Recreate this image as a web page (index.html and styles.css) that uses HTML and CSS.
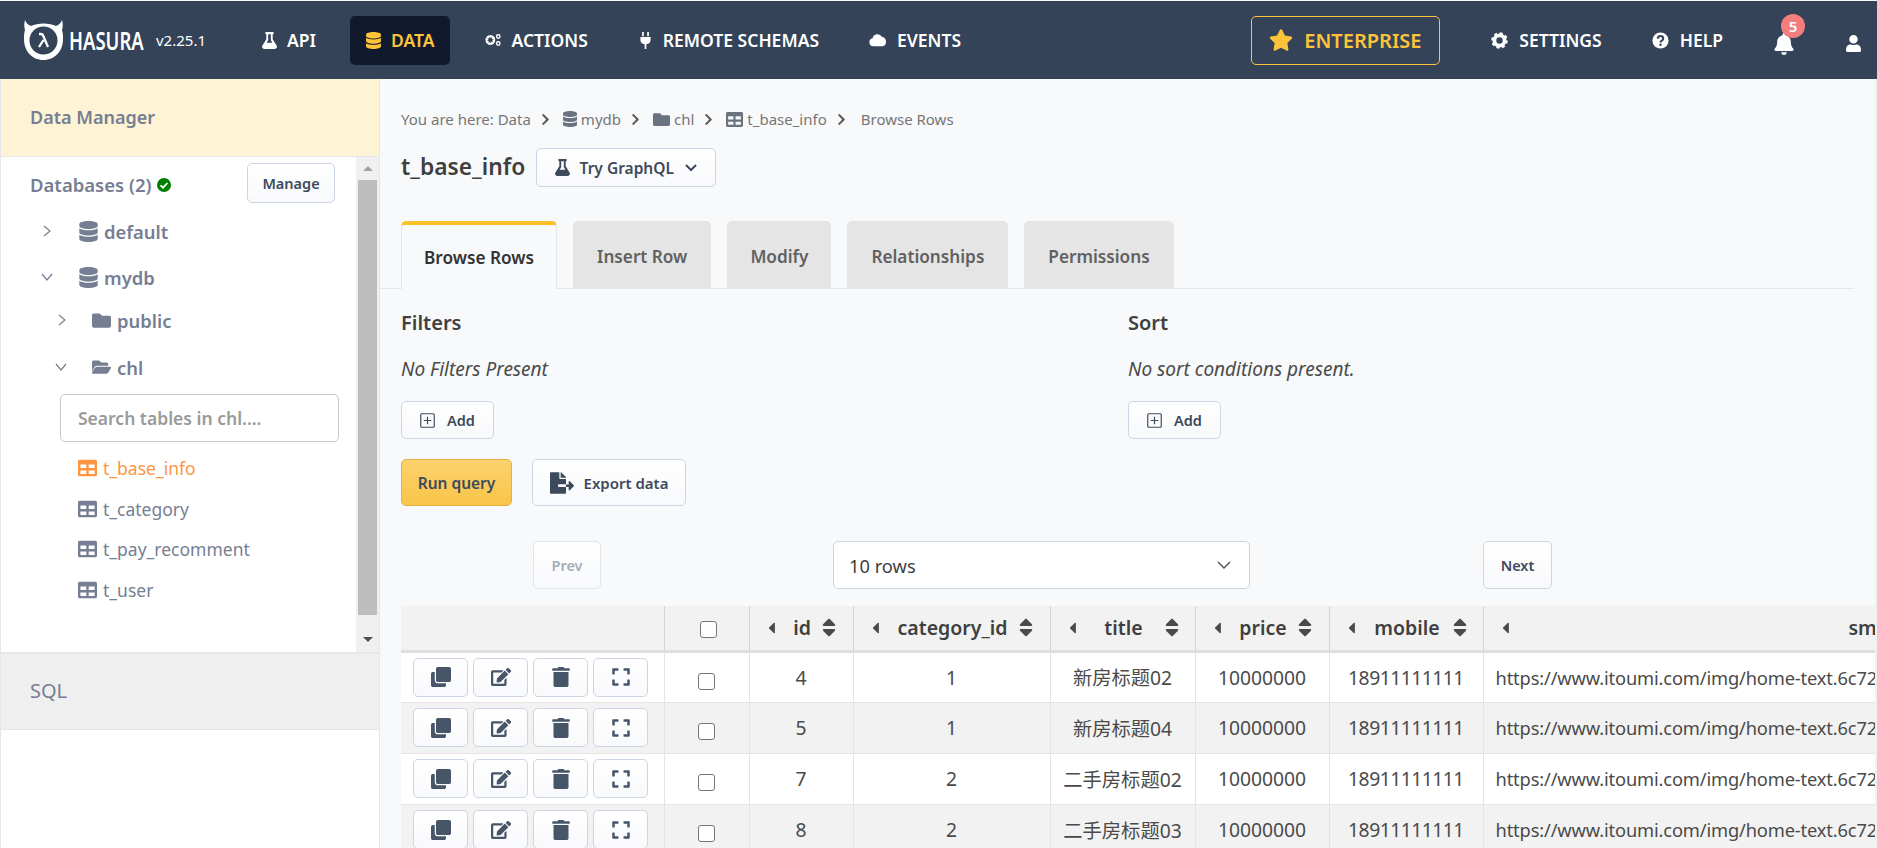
FILE: index.html
```html
<!DOCTYPE html>
<html lang="en">
<head>
<meta charset="utf-8">
<title>Hasura</title>
<link rel="stylesheet" href="styles.css">
</head>
<body>
<svg class="defs" width="0" height="0" aria-hidden="true">
  <defs>
    <symbol id="i-db" viewBox="0 0 448 512"><path d="M448 73v46c0 40-100 73-224 73S0 159 0 119V73C0 33 100 0 224 0s224 33 224 73zm0 103v103c0 40-100 73-224 73S0 319 0 279V176c48 33 136 49 224 49s176-16 224-49zm0 160v103c0 40-100 73-224 73S0 479 0 439V336c48 33 136 49 224 49s176-16 224-49z"/></symbol>
    <symbol id="i-table" viewBox="0 0 512 512"><path d="M464 32H48C21 32 0 53 0 80v352c0 27 21 48 48 48h416c27 0 48-21 48-48V80c0-27-21-48-48-48zM224 416H64v-96h160v96zm0-160H64v-96h160v96zm224 160H288v-96h160v96zm0-160H288v-96h160v96z"/></symbol>
    <symbol id="i-folder" viewBox="0 0 512 512"><path d="M464 128H272l-64-64H48C21 64 0 85 0 112v288c0 27 21 48 48 48h416c27 0 48-21 48-48V176c0-27-21-48-48-48z"/></symbol>
    <symbol id="i-folder-open" viewBox="0 0 576 512"><path d="M573 279l-72 123c-14 24-43 46-72 46H29c-23 0-38-25-26-45l72-123c14-24 43-46 72-46h400c23 0 38 25 26 45zM147 200h341v-48c0-27-21-48-48-48H280l-64-64H48C21 40 0 61 0 88v278l69-119c17-29 48-47 78-47z"/></symbol>
    <symbol id="i-flask" viewBox="0 0 448 512"><path d="M437 409L320 221V64h8c13 0 24-11 24-24V24c0-13-11-24-24-24H120c-13 0-24 11-24 24v16c0 13 11 24 24 24h8v157L11 409c-29 47 4 103 59 103h308c55 0 88-56 59-103zM138 320l40-65c3-4 6-9 6-16V64h80v175c0 7 3 12 6 16l40 65H138z"/></symbol>
    <symbol id="i-copy" viewBox="0 0 512 512"><path d="M464 0c27 0 48 21 48 48v288c0 27-21 48-48 48H176c-27 0-48-21-48-48V48c0-27 21-48 48-48h288zM176 416c-44 0-80-36-80-80V128H48c-27 0-48 21-48 48v288c0 27 21 48 48 48h288c27 0 48-21 48-48v-48H176z"/></symbol>
    <symbol id="i-edit" viewBox="0 0 576 512"><path d="M403 79l90 90c4 4 4 10 0 14L275 401l-93 10c-12 2-22-8-21-21l11-93L390 79c4-4 9-4 13 0zm162-23l-49-48c-15-15-39-15-54 0l-35 35c-4 4-4 10 0 14l90 90c4 4 10 4 14 0l35-35c14-16 14-40-1-56zM384 346v102H64V128h230c3 0 6-1 8-4l40-40c8-8 2-20-8-20H48C21 64 0 85 0 112v352c0 27 21 48 48 48h352c27 0 48-21 48-48V306c0-11-13-16-20-9l-40 40c-3 2-4 6-4 9z"/></symbol>
    <symbol id="i-trash" viewBox="0 0 448 512"><path d="M32 464c0 27 21 48 48 48h288c27 0 48-21 48-48V128H32v336zM432 32H312l-9-19c-4-8-12-13-21-13H166c-9 0-17 5-21 13l-9 19H16C7 32 0 39 0 48v32c0 9 7 16 16 16h416c9 0 16-7 16-16V48c0-9-7-16-16-16z"/></symbol>
    <symbol id="i-expand" viewBox="0 0 448 512"><path d="M0 180V56c0-13 11-24 24-24h124c7 0 12 5 12 12v40c0 7-5 12-12 12H64v84c0 7-5 12-12 12H12c-7 0-12-5-12-12zM288 44v40c0 7 5 12 12 12h84v84c0 7 5 12 12 12h40c7 0 12-5 12-12V56c0-13-11-24-24-24H300c-7 0-12 5-12 12zm148 276h-40c-7 0-12 5-12 12v84h-84c-7 0-12 5-12 12v40c0 7 5 12 12 12h124c13 0 24-11 24-24V332c0-7-5-12-12-12zM160 468v-40c0-7-5-12-12-12H64v-84c0-7-5-12-12-12H12c-7 0-12 5-12 12v124c0 13 11 24 24 24h124c7 0 12-5 12-12z"/></symbol>
    <symbol id="i-sort" viewBox="0 0 320 512"><path d="M41 288h238c21 0 32 26 17 41L177 448c-9 9-25 9-34 0L24 329c-15-15-4-41 17-41zM296 183L177 64c-9-9-25-9-34 0L24 183c-15 15-4 41 17 41h238c21 0 32-26 17-41z"/></symbol>
    <symbol id="i-left" viewBox="0 0 192 512"><path d="M192 127v258c0 18-21 27-34 14L29 270c-8-8-8-20 0-28L158 113c13-13 34-4 34 14z"/></symbol>
    <symbol id="i-chev" viewBox="0 0 320 512"><path d="M285 273L91 467c-9 9-24 9-34 0l-22-22c-10-10-10-25 0-34l154-155L35 101c-10-9-10-24 0-34l22-22c10-9 25-9 34 0l194 194c10 10 10 25 0 34z"/></symbol>
  </defs>
</svg>

<header class="topbar">
  <div class="brand">
    <svg class="logo" viewBox="0 0 39 40" aria-hidden="true">
      <path fill="#fff" d="M1 0c1 3 3 5 6 6 3-1.500 8-2.500 12.500-2.500S29 4.500 32 6c3-1 5-3 6-6 1 3 1 7 0 10 1 3 1 6 1 9 0 12-8 21-19.500 21S0 31 0 19c0-3 0-6 1-9C0 7 0 3 1 0z"/>
      <circle cx="19.500" cy="20.500" r="14" fill="#344358"/>
      <path fill="none" stroke="#fff" stroke-width="2.300" d="M15 14h2c1.500 0 2 1 2.500 2.500L24 27M19.500 20l-4.500 7"/>
    </svg>
    <span class="wordmark">HASURA</span>
    <span class="version">v2.25.1</span>
  </div>
  <nav class="nav">
    <a class="nav-item"><svg class="nav-icon"><use href="#i-flask"/></svg>API</a>
    <a class="nav-item nav-active"><svg class="nav-icon"><use href="#i-db"/></svg>DATA</a>
    <a class="nav-item"><svg class="nav-icon-wide" viewBox="0 0 20 16" aria-hidden="true"><circle cx="7" cy="8" r="4" fill="none" stroke="#fff" stroke-width="3" stroke-dasharray="2 1"/><circle cx="7" cy="8" r="4.500" fill="none" stroke="#fff" stroke-width="2"/><circle cx="16" cy="4" r="2" fill="none" stroke="#fff" stroke-width="1.500"/><circle cx="16" cy="12" r="2" fill="none" stroke="#fff" stroke-width="1.500"/></svg>ACTIONS</a>
    <a class="nav-item"><svg class="nav-icon" viewBox="0 0 16 20" aria-hidden="true"><path fill="#fff" d="M4 0h2v5H4zM10 0h2v5h-2zM2 6h12v3c0 3-2 5-5 5.500V20H7v-5.500C4 14 2 12 2 9z"/></svg>REMOTE SCHEMAS</a>
    <a class="nav-item"><svg class="nav-icon-wide" viewBox="0 0 20 14" aria-hidden="true"><path fill="#fff" d="M5 14a4.500 4.500 0 0 1-1-8.900A5.500 5.500 0 0 1 14.300 3.500 5.500 5.500 0 0 1 15.500 14z"/></svg>EVENTS</a>
  </nav>
  <a class="enterprise"><svg class="star" viewBox="0 0 576 512" aria-hidden="true"><path d="M259 18l-65 132-146 21c-26 4-37 36-18 55l106 103-25 146c-5 26 23 46 46 33l131-68 131 68c23 13 51-7 46-33l-25-146 106-103c19-19 8-51-18-55l-146-21-65-132c-12-23-46-24-58 0z"/></svg>ENTERPRISE</a>
  <div class="nav-right">
    <a class="nav-item"><svg class="nav-icon-sq" viewBox="0 0 20 20" aria-hidden="true"><circle cx="10" cy="10" r="6" fill="none" stroke="#fff" stroke-width="4.500"/><circle cx="10" cy="10" r="8.500" fill="none" stroke="#fff" stroke-width="2.500" stroke-dasharray="3.500 3.170"/></svg>SETTINGS</a>
    <a class="nav-item"><svg class="nav-icon-sq" viewBox="0 0 20 20" aria-hidden="true"><circle cx="10" cy="10" r="9.500" fill="#fff"/><path fill="none" stroke="#344358" stroke-width="2.400" d="M6.800 7.800c0-4.200 6.400-4 6.400 0 0 2.600-3.200 2.200-3.200 4.500"/><circle cx="10" cy="15" r="1.400" fill="#344358"/></svg>HELP</a>
    <span class="bell-wrap">
      <svg class="bell" viewBox="0 0 448 512" aria-hidden="true"><path fill="#fff" d="M224 512c35 0 64-29 64-64H160c0 35 29 64 64 64zm215-150c-19-21-55-52-55-154 0-78-54-140-128-155V32a32 32 0 0 0-64 0v21C118 68 64 130 64 208c0 102-36 133-55 154-6 6-9 14-9 22 0 16 13 32 32 32h384c19 0 32-16 32-32 0-8-3-16-9-22z"/></svg>
      <span class="badge">5</span>
    </span>
    <svg class="user" viewBox="0 0 448 512" aria-hidden="true"><path fill="#fff" d="M224 256a128 128 0 1 0 0-256 128 128 0 0 0 0 256zm90 32h-17a174 174 0 0 1-146 0h-17C60 288 0 348 0 422v42c0 27 21 48 48 48h352c27 0 48-21 48-48v-42c0-74-60-134-134-134z"/></svg>
  </div>
</header>

<div class="layout">
  <aside class="sidebar">
    <div class="side-head">Data Manager</div>
    <div class="side-panel">
      <div class="tree">
        <div class="db-row">
          <span class="db-title">Databases (2)</span>
          <svg class="ok" viewBox="0 0 14 14" aria-hidden="true"><circle cx="7" cy="7" r="7" fill="#008000"/><path d="M3.500 7.300l2.500 2.400 4.500-4.700" fill="none" stroke="#fff" stroke-width="1.800"/></svg>
          <button class="btn btn-manage">Manage</button>
        </div>
        <div class="node node-db"><svg class="caret caret-right" viewBox="0 0 10 14"><path d="M2 2l6 5-6 5"/></svg><svg class="node-icon"><use href="#i-db"/></svg><b>default</b></div>
        <div class="node node-db node-db2"><svg class="caret caret-down" viewBox="0 0 14 10"><path d="M2 2l5 6 5-6"/></svg><svg class="node-icon"><use href="#i-db"/></svg><b>mydb</b></div>
        <div class="node node-sch"><svg class="caret caret-right" viewBox="0 0 10 14"><path d="M2 2l6 5-6 5"/></svg><svg class="node-icon"><use href="#i-folder"/></svg><b>public</b></div>
        <div class="node node-sch node-sch2"><svg class="caret caret-down" viewBox="0 0 14 10"><path d="M2 2l5 6 5-6"/></svg><svg class="node-icon"><use href="#i-folder-open"/></svg><b>chl</b></div>
        <div class="search">Search tables in chl....</div>
        <ul class="tables">
          <li class="tbl tbl-active"><svg class="tbl-icon"><use href="#i-table"/></svg>t_base_info</li>
          <li class="tbl"><svg class="tbl-icon"><use href="#i-table"/></svg>t_category</li>
          <li class="tbl"><svg class="tbl-icon"><use href="#i-table"/></svg>t_pay_recomment</li>
          <li class="tbl"><svg class="tbl-icon"><use href="#i-table"/></svg>t_user</li>
        </ul>
      </div>
      <div class="scrollbar">
        <span class="arrow-up"></span>
        <span class="thumb"></span>
        <span class="arrow-down"></span>
      </div>
    </div>
    <div class="side-sql">SQL</div>
  </aside>

  <main class="main">
    <div class="crumbs">
      <span>You are here: Data</span><svg class="crumb-sep"><use href="#i-chev"/></svg>
      <svg class="crumb-db"><use href="#i-db"/></svg><span>mydb</span><svg class="crumb-sep"><use href="#i-chev"/></svg>
      <svg class="crumb-icon"><use href="#i-folder"/></svg><span>chl</span><svg class="crumb-sep"><use href="#i-chev"/></svg>
      <svg class="crumb-icon"><use href="#i-table"/></svg><span>t_base_info</span><svg class="crumb-sep crumb-last"><use href="#i-chev"/></svg>
      <span>Browse Rows</span>
    </div>
    <div class="title-row">
      <h1 class="title">t_base_info</h1>
      <button class="btn btn-graphql"><svg class="btn-icon"><use href="#i-flask"/></svg>Try GraphQL<svg class="btn-chev" viewBox="0 0 14 10"><path d="M2 2l5 5 5-5"/></svg></button>
    </div>
    <div class="tabs">
      <span class="tab tab-active">Browse Rows</span>
      <span class="tab">Insert Row</span>
      <span class="tab tab-modify">Modify</span>
      <span class="tab">Relationships</span>
      <span class="tab">Permissions</span>
    </div>
    <div class="filters">
      <section class="fcol">
        <h2 class="ftitle">Filters</h2>
        <p class="fnote">No Filters Present</p>
        <button class="btn btn-add"><svg class="plus" viewBox="0 0 14 14"><rect x=".7" y=".7" width="12.600" height="12.600" rx="1"/><path d="M7 3.500v7M3.500 7h7"/></svg>Add</button>
      </section>
      <section class="fcol">
        <h2 class="ftitle">Sort</h2>
        <p class="fnote">No sort conditions present.</p>
        <button class="btn btn-add"><svg class="plus" viewBox="0 0 14 14"><rect x=".7" y=".7" width="12.600" height="12.600" rx="1"/><path d="M7 3.500v7M3.500 7h7"/></svg>Add</button>
      </section>
    </div>
    <div class="actions">
      <button class="btn btn-run">Run query</button>
      <button class="btn btn-export"><svg class="export-icon" viewBox="0 0 576 512"><path d="M384 121a24 24 0 0 0-7-17L279 7a24 24 0 0 0-17-7h-6v128h128zm187 188l-96-96c-10-10-27-3-27 11v65h-64v64h64v65c0 14 17 21 27 11l96-96c7-6 7-18 0-24zM192 336v-32c0-9 7-16 16-16h176V160H248c-13 0-24-11-24-24V0H24C11 0 0 11 0 24v464c0 13 11 24 24 24h336c13 0 24-11 24-24V352H208c-9 0-16-7-16-16z"/></svg>Export data</button>
    </div>
    <div class="pager">
      <button class="btn btn-prev">Prev</button>
      <div class="rows-select">10 rows<svg class="rows-chev" viewBox="0 0 14 10"><path d="M1 2l6 6 6-6"/></svg></div>
      <button class="btn btn-next">Next</button>
    </div>
    <div class="table-clip">
      <table class="grid">
        <colgroup>
          <col class="c-act"><col class="c-chk"><col class="c-id"><col class="c-cat"><col class="c-title"><col class="c-price"><col class="c-mobile"><col class="c-url">
        </colgroup>
        <thead>
          <tr>
            <th></th>
            <th><span class="check check-head"></span></th>
            <th><span class="th"><svg class="th-left"><use href="#i-left"/></svg><span>id</span><svg class="th-sort"><use href="#i-sort"/></svg></span></th>
            <th><span class="th"><svg class="th-left"><use href="#i-left"/></svg><span>category_id</span><svg class="th-sort"><use href="#i-sort"/></svg></span></th>
            <th><span class="th"><svg class="th-left"><use href="#i-left"/></svg><span>title</span><svg class="th-sort"><use href="#i-sort"/></svg></span></th>
            <th><span class="th"><svg class="th-left"><use href="#i-left"/></svg><span>price</span><svg class="th-sort"><use href="#i-sort"/></svg></span></th>
            <th><span class="th"><svg class="th-left"><use href="#i-left"/></svg><span>mobile</span><svg class="th-sort"><use href="#i-sort"/></svg></span></th>
            <th><span class="th th-url"><svg class="th-left"><use href="#i-left"/></svg><span>small_image</span></span></th>
          </tr>
        </thead>
        <tbody>
          <tr>
            <td><span class="row-btns"><button class="ic"><svg><use href="#i-copy"/></svg></button><button class="ic"><svg><use href="#i-edit"/></svg></button><button class="ic"><svg><use href="#i-trash"/></svg></button><button class="ic"><svg><use href="#i-expand"/></svg></button></span></td>
            <td><span class="check"></span></td><td>4</td><td>1</td><td>新房标题02</td><td>10000000</td><td class="mobile">18911111111</td><td class="url">https://www.itoumi.com/img/home-text.6c72aa94.png</td>
          </tr>
          <tr>
            <td><span class="row-btns"><button class="ic"><svg><use href="#i-copy"/></svg></button><button class="ic"><svg><use href="#i-edit"/></svg></button><button class="ic"><svg><use href="#i-trash"/></svg></button><button class="ic"><svg><use href="#i-expand"/></svg></button></span></td>
            <td><span class="check"></span></td><td>5</td><td>1</td><td>新房标题04</td><td>10000000</td><td class="mobile">18911111111</td><td class="url">https://www.itoumi.com/img/home-text.6c72aa94.png</td>
          </tr>
          <tr>
            <td><span class="row-btns"><button class="ic"><svg><use href="#i-copy"/></svg></button><button class="ic"><svg><use href="#i-edit"/></svg></button><button class="ic"><svg><use href="#i-trash"/></svg></button><button class="ic"><svg><use href="#i-expand"/></svg></button></span></td>
            <td><span class="check"></span></td><td>7</td><td>2</td><td>二手房标题02</td><td>10000000</td><td class="mobile">18911111111</td><td class="url">https://www.itoumi.com/img/home-text.6c72aa94.png</td>
          </tr>
          <tr>
            <td><span class="row-btns"><button class="ic"><svg><use href="#i-copy"/></svg></button><button class="ic"><svg><use href="#i-edit"/></svg></button><button class="ic"><svg><use href="#i-trash"/></svg></button><button class="ic"><svg><use href="#i-expand"/></svg></button></span></td>
            <td><span class="check"></span></td><td>8</td><td>2</td><td>二手房标题03</td><td>10000000</td><td class="mobile">18911111111</td><td class="url">https://www.itoumi.com/img/home-text.6c72aa94.png</td>
          </tr>
        </tbody>
      </table>
    </div>
  </main>
</div>
```

FILE: styles.css
```css
* { box-sizing: border-box; }
html, body { margin: 0; height: 100%; overflow: hidden; }
body { font-family: "Noto Sans", "Noto Sans CJK SC", sans-serif; color: #3d4a5c; background: #f8f9fb; }
.defs { position: absolute; }
svg { fill: currentColor; flex: none; }

/* top bar */
.topbar { height: 78px; margin-top: 1px; background: #344358; display: flex; align-items: center; padding: 0 16px 0 24px; color: #fff; font-weight: 600; }
.brand { display: flex; align-items: center; width: 222px; flex: none; }
.logo { width: 39px; height: 40px; margin-right: 6px; }
.wordmark { font-size: 25px; line-height: 30px; font-weight: 600; transform: scaleX(.74); transform-origin: left; width: 74px; }
.version { font-size: 15px; font-weight: 400; margin-left: 13px; }
.nav { display: flex; align-items: center; gap: 18px; }
.nav-item { display: flex; align-items: center; height: 49px; padding: 0 16px; font-size: 17.500px; color: #fff; white-space: nowrap; }
.nav-icon { width: 15px; height: 17px; margin-right: 10px; color: #fff; }
.nav-icon-sq { width: 17px; height: 17px; margin-right: 11px; }
.nav-icon-wide { width: 18px; height: 14px; margin-right: 10px; }
.nav-active { background: #111a2c; border-radius: 5px; color: #fdc33b; padding-right: 15px; }
.nav-active .nav-icon { color: #fdc33b; }
.enterprise { margin-left: auto; width: 189px; height: 49px; border: 1px solid #fdc33b; border-radius: 5px; color: #fdc33b; display: flex; align-items: center; padding-left: 17px; font-size: 20px; font-weight: 600; flex: none; }
.star { width: 24px; height: 22px; margin-right: 11px; fill: #fdc33b; }
.nav-right { display: flex; align-items: center; gap: 18px; margin-left: 35px; flex: none; }
.bell-wrap { position: relative; display: flex; margin-left: 17px; margin-top: 8px; }
.bell { width: 20px; height: 22px; }
.badge { position: absolute; top: -19px; left: 7px; width: 24px; height: 24px; border-radius: 50%; background: #f47e7e; color: #fff; font-size: 15px; text-align: center; line-height: 24px; }
.user { width: 15px; height: 17px; margin-left: 34px; margin-top: 6px; }

/* layout */
.layout { display: flex; height: 769px; }
.sidebar { width: 380px; background: #fff; border-left: 1px solid #e5e7eb; border-right: 1px solid #e5e7eb; flex: none; color: #767e93; }
.side-head { height: 78px; padding: 25px 29px 0; background: #fff3d5; border-bottom: 1px solid #e5e7eb; font-size: 18px; line-height: 26px; font-weight: 600; }
.side-panel { height: 497px; display: flex; border-bottom: 2px solid #e5e7eb; }
.tree { width: 355px; flex: none; position: relative; }
.db-row { display: flex; align-items: center; height: 44px; margin-top: 5px; padding-left: 29px; }
.db-title { font-size: 18.500px; font-weight: 600; }
.ok { width: 14px; height: 14px; margin-left: 5px; margin-top: 2px; }
.btn { font-family: inherit; font-size: 15px; font-weight: 600; color: #3d4a5c; background: linear-gradient(#fff, #f8f9fb); border: 1px solid #ccd5e3; border-radius: 5px; display: inline-flex; align-items: center; justify-content: center; padding: 0; }
.btn-manage { position: absolute; left: 246px; top: 6px; width: 88px; height: 40px; font-size: 14.500px; }
.node { display: flex; align-items: center; height: 24px; font-size: 18.400px; margin-top: 13px; }
.node b { font-weight: 600; }
.caret { fill: none; stroke: currentColor; stroke-width: 1.200; }
.caret-right { width: 10px; height: 14px; }
.caret-down { width: 14px; height: 10px; }
.node-icon { width: 19px; height: 21px; margin-right: 6px; }
.node-db { padding-left: 41px; }
.node-db .caret { margin-right: 27px; }
.node-db .caret-down { margin-left: -2px; margin-right: 25px; }
.node-db2 { margin-top: 22px; }
.node-sch { padding-left: 56px; margin-top: 19px; }
.node-sch .caret { margin-right: 25px; }
.node-sch .caret-down { margin-left: -3px; margin-right: 24px; }
.node-sch2 { margin-top: 23px; }
.search { margin: 15px 0 0 59px; width: 279px; height: 48px; border: 1px solid #c8c8c8; border-radius: 5px; padding: 0 17px; font-size: 17.500px; font-weight: 600; line-height: 46px; color: #9a9a9a; white-space: nowrap; overflow: hidden; }
.tables { list-style: none; margin: 6px 0 0; padding: 0 0 0 77px; }
.tbl { display: flex; align-items: center; height: 40.500px; font-size: 17.500px; }
.tbl-icon { width: 19px; height: 20px; margin-right: 6px; }
.tbl-active { color: #fd9540; }
.scrollbar { width: 23px; flex: none; background: #f0f0f0; display: flex; flex-direction: column; align-items: center; }
.arrow-up { margin-top: 9px; border: 5px solid transparent; border-top: 0; border-bottom-color: #a3a3a3; }
.thumb { width: 19px; height: 435px; background: #bdbdbd; margin-top: 9px; }
.arrow-down { margin-top: 22px; border: 5px solid transparent; border-bottom: 0; border-top-color: #505050; }
.side-sql { height: 76px; background: #efefef; border-bottom: 1px solid #e5e7eb; padding: 0 29px; font-size: 20px; line-height: 74px; }

/* main */
.main { flex: 1; min-width: 0; padding: 0 0 0 21px; overflow: hidden; color: #3d4a5c; border-right: 2px solid #f0f0f0; }
.crumbs { display: flex; align-items: center; height: 22px; margin-top: 29px; font-size: 15px; color: #767676; }
.crumb-sep { width: 9px; height: 13px; margin: 0 13px 0 10px; color: #595959; }
.crumb-db { width: 14px; height: 16px; margin-right: 4px; color: #6b7280; }
.crumb-icon { width: 17px; height: 17px; margin-right: 4px; color: #6b7280; }
.crumb-last { margin-right: 15px; }
.title-row { display: flex; align-items: center; margin-top: 18px; height: 39px; }
.title { margin: -3px 0 0; font-size: 22.800px; font-weight: 600; color: #3f3f3f; }
.btn-graphql { height: 39px; width: 180px; margin-left: 11px; font-size: 15.500px; }
.btn-icon { width: 15px; height: 17px; margin-right: 10px; }
.btn-chev { width: 14px; height: 10px; margin-left: 10px; fill: none; stroke: currentColor; stroke-width: 2; }
.tabs { display: flex; gap: 16px; margin: 34px 21px 0 -21px; padding-left: 21px; height: 68px; border-bottom: 1px solid #e3e6eb; }
.tab { height: 67px; padding: 4px 24px 0; display: flex; align-items: center; font-size: 17.200px; font-weight: 600; color: #616161; background: #e5e5e5; border-radius: 5px 5px 0 0; }
.tab-modify { padding: 4px 23px 0; }
.tab-active { height: 68px; color: #333; background: #f8f9fb; border: 1px solid #e3e6eb; border-top: 4px solid #fdc12a; border-bottom: 0; padding: 0 22px; }
.filters { display: flex; margin-top: 22px; }
.fcol { width: 727px; }
.ftitle { margin: 0; font-size: 20px; font-weight: 600; color: #3f3f3f; line-height: 24px; }
.fnote { margin: 21px 0 0; font-size: 19px; font-style: italic; font-weight: 400; color: #4a4a4a; line-height: 26px; }
.btn-add { margin-top: 19px; width: 93px; height: 38px; font-size: 14.500px; }
.plus { width: 15px; height: 15px; margin-right: 12px; fill: none; stroke: currentColor; stroke-width: 1.100; }
.actions { display: flex; gap: 20px; margin-top: 20px; }
.btn-run { width: 111px; height: 47px; background: linear-gradient(#fbd26f, #f9c548); border-color: #e5b040; font-size: 15.500px; }
.btn-export { width: 154px; height: 47px; }
.export-icon { width: 24px; height: 22px; margin-right: 10px; }
.pager { display: flex; align-items: center; margin-top: 35px; padding-left: 132px; }
.btn-prev { width: 68px; height: 48px; font-size: 14.500px; color: #a5acb8; border-color: #dfe3ea; }
.rows-select { margin-left: 232px; width: 417px; height: 48px; background: #fff; border: 1px solid #ccd5e3; border-radius: 5px; display: flex; align-items: center; justify-content: space-between; padding: 0 18px 0 15px; font-size: 18.300px; color: #3f3f3f; }
.rows-chev { width: 14px; height: 10px; fill: none; stroke: #555; stroke-width: 1.500; }
.btn-next { margin-left: 233px; width: 69px; height: 48px; font-size: 14.500px; }
.table-clip { margin-top: 17px; overflow: hidden; }
.grid { border-collapse: collapse; table-layout: fixed; width: 1762px; background: #fff; }
.c-act { width: 263px; }
.c-chk { width: 85px; }
.c-id { width: 104px; }
.c-cat { width: 197px; }
.c-title { width: 145px; }
.c-price { width: 134px; }
.c-mobile { width: 154px; }
.c-url { width: 680px; }
.grid th { height: 45px; background: #f2f2f2; border-right: 1px solid #d4d4d4; border-bottom: 3px solid #dedede; font-size: 19.500px; font-weight: 600; color: #3f3f3f; padding: 0; }
.grid td { height: 51px; border-right: 1px solid #e4e4e4; border-bottom: 1px solid #e4e4e4; padding: 0; text-align: center; font-size: 19.300px; color: #4a4a4a; white-space: nowrap; overflow: hidden; }
.grid tbody tr:nth-child(even) td { background: #f2f2f2; }
.grid td.url { text-align: left; padding-left: 12px; font-size: 18.300px; letter-spacing: -.15px; }
.grid td.mobile { letter-spacing: -.5px; }
.th { display: flex; align-items: center; justify-content: space-between; padding: 0 16px 0 18px; }
.th > span { margin-left: 7px; }
.th-url { justify-content: flex-start; gap: 333px; }
.th-left { width: 7px; height: 18px; color: #4a4a4a; }
.th-sort { width: 14px; height: 23px; color: #4a4a4a; }
.check { display: inline-block; width: 17px; height: 17px; border: 1.500px solid #767676; border-radius: 3px; background: #fff; vertical-align: middle; margin-top: 4px; }
.check-head { margin: 0 0 0 4px; }
.row-btns { display: flex; gap: 5px; padding-left: 12px; }
.ic { width: 55px; height: 39px; background: linear-gradient(#fff, #f8f9fb); border: 1px solid #ccd5e3; border-radius: 5px; padding: 0; display: flex; align-items: center; justify-content: center; color: #475569; }
.ic svg { width: 20px; height: 20px; }
```
